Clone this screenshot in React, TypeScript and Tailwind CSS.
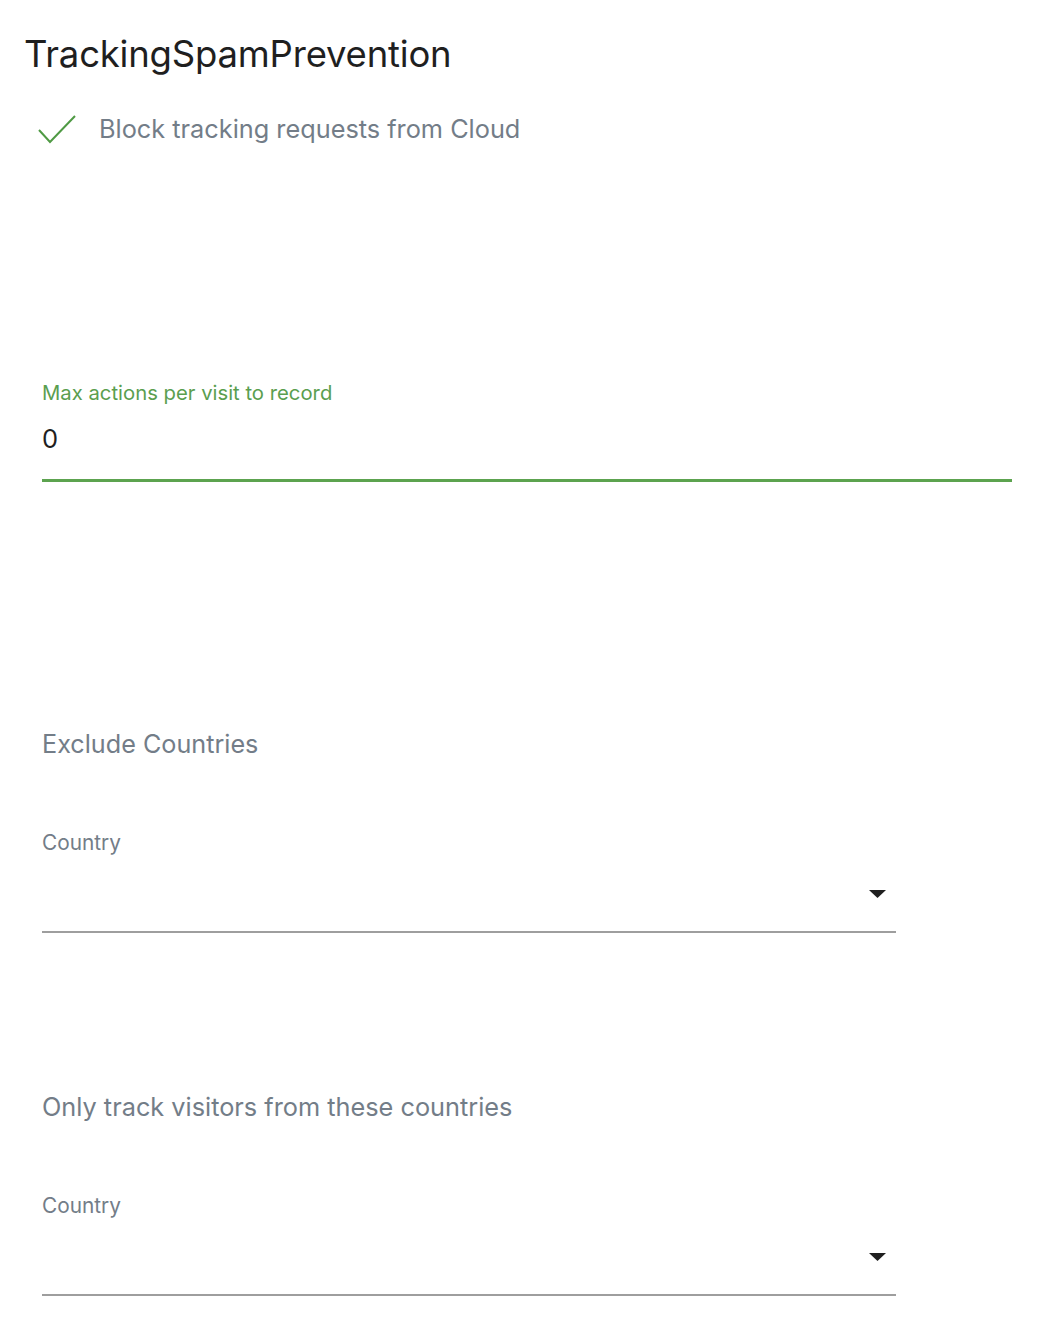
import React from "react";

function Caret() {
  return (
    <svg width="17" height="8" viewBox="0 0 17 8" className="fill-[#1f1f1f]">
      <path d="M0 0h17L8.5 8z" />
    </svg>
  );
}

function CountrySelect() {
  return (
    <div className="w-[854px]">
      <div className="text-[20.8px] leading-[24px] text-[#737d88]">Country</div>
      <div className="flex h-[78px] items-center justify-end border-b-2 border-[#9e9e9e] pr-[10px] pt-[2px]">
        <Caret />
      </div>
    </div>
  );
}

export default function App() {
  return (
    <div className="min-h-[1318px] bg-white font-['Inter',sans-serif] text-[#1f1f1f]">
      <h1 className="pl-[24px] pt-[30px] text-[36.5px] leading-[48px] font-normal tracking-[-0.2px]">
        TrackingSpamPrevention
      </h1>
      <div className="mt-[36px] flex items-center pl-[38px]">
        <svg width="38" height="30" viewBox="0 0 38 30" fill="none" className="stroke-[#4f9a44]">
          <path d="M1 16l11 12L37 2" strokeWidth="2" />
        </svg>
        <span className="ml-[23px] text-[25.3px] leading-[30px] text-[#737d88]">
          Block tracking requests from Cloud
        </span>
      </div>

      <div className="mt-[237px] pl-[42px] pr-[26px]">
        <label className="block text-[20.3px] leading-[24px] text-[#5a9e4f]">
          Max actions per visit to record
        </label>
        <div className="mt-[19px] h-[58px] border-b-[3px] border-[#5ca34f] text-[25.5px] leading-[30px]">
          0
        </div>
      </div>

      <div className="mt-[247px] pl-[42px]">
        <h2 className="text-[25.2px] leading-[30px] text-[#737d88]">Exclude Countries</h2>
        <div className="mt-[72px]">
          <CountrySelect />
        </div>
      </div>

      <div className="mt-[159px] pl-[42px]">
        <h2 className="text-[25.3px] leading-[30px] text-[#737d88]">
          Only track visitors from these countries
        </h2>
        <div className="mt-[72px]">
          <CountrySelect />
        </div>
      </div>
    </div>
  );
}
